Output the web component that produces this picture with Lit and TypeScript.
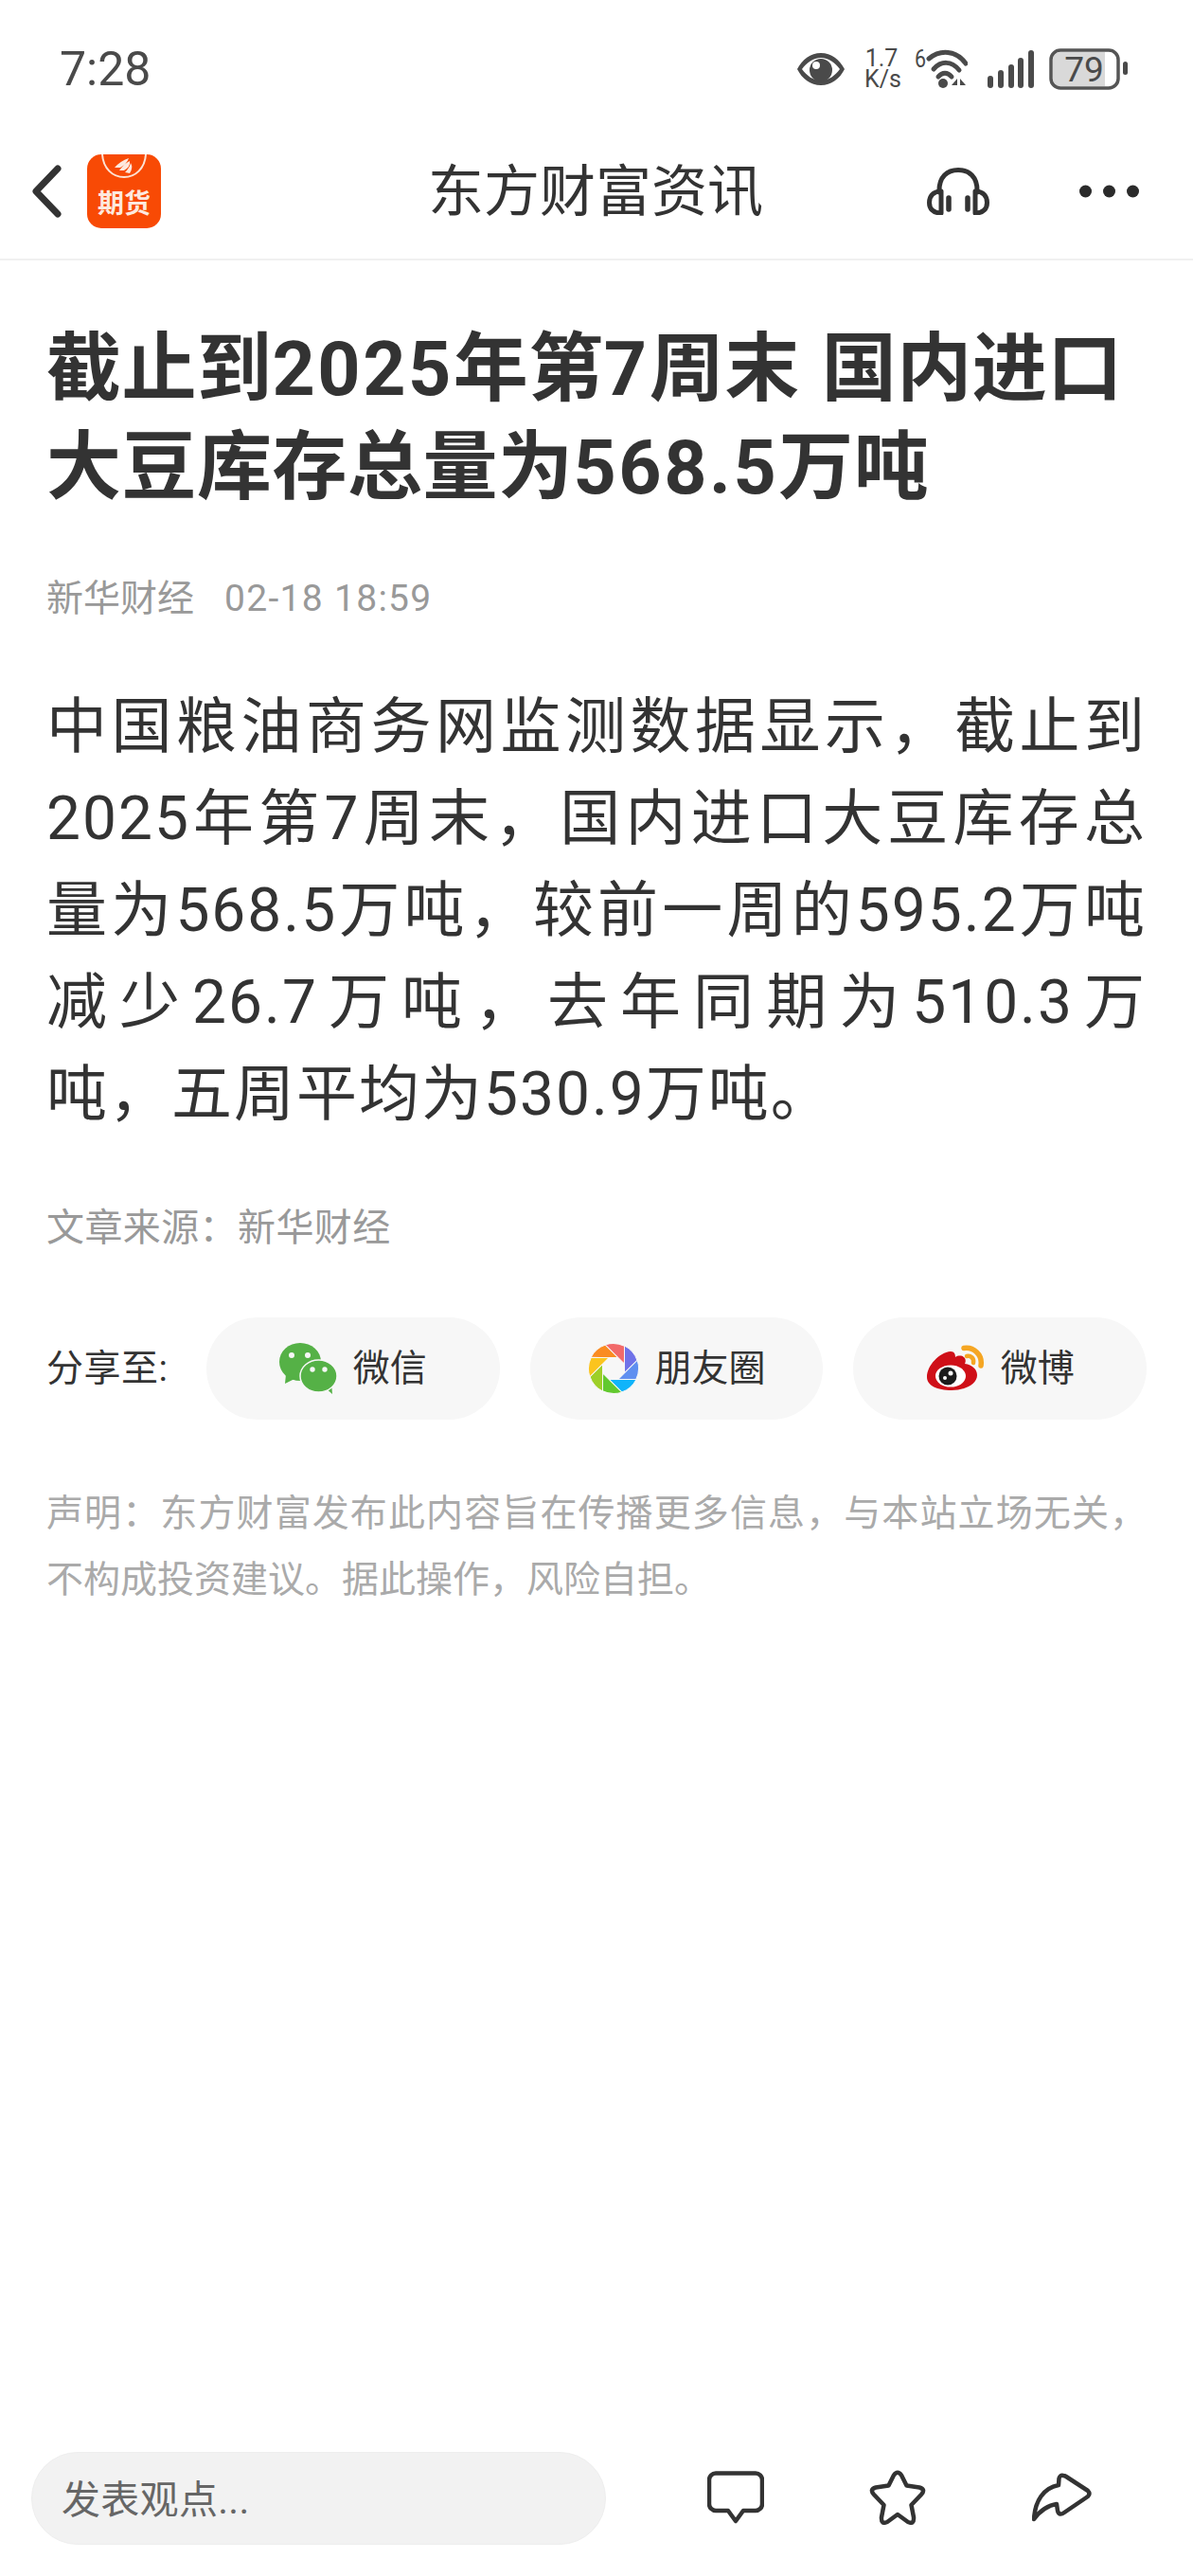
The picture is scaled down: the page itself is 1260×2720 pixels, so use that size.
import { LitElement, html, css, svg } from 'lit';
import { customElement } from 'lit/decorators.js';

const blades = ['#fa8c22', '#f26a6a', '#7072e8', '#5f8ff0', '#10b4fa', '#62c92e', '#9ecf28', '#fbc41e'];

const bodyLines = [
  '中国粮油商务网监测数据显示，截止到',
  '2025年第7周末，国内进口大豆库存总',
  '量为568.5万吨，较前一周的595.2万吨',
  '减少26.7万吨，去年同期为510.3万',
  '吨，五周平均为530.9万吨。',
];

@customElement('app-root')
export class AppRoot extends LitElement {
  static styles = css`
    :host {
      display: block;
      font-family: Roboto, "Noto Sans CJK SC", sans-serif;
      background: #fff;
      color: #333;
    }
    .page {
      min-height: 2720px;
      display: flex;
      flex-direction: column;
    }
    svg { display: block; flex: none; }
    .status {
      height: 145px;
      display: flex;
      align-items: center;
      padding: 0 68px 0 63px;
      color: #4a4a4a;
    }
    .time { font-size: 50px; line-height: 1; flex: 1; }
    .eye { margin-right: -1px; }
    .speed {
      font-size: 25px;
      line-height: 22px;
      width: 36px;
      text-align: center;
      margin: 0 17px 0 21px;
    }
    .wifi { margin-top: -6px; }
    .signal { margin-left: 21px; }
    .battery { margin-left: 16px; }
    .nav {
      height: 130px;
      box-sizing: border-box;
      display: flex;
      align-items: center;
      border-bottom: 2px solid #f0f0f0;
      padding: 0 57px 14px 34px;
      position: relative;
    }
    .logo { margin-left: 27px; }
    .nav-title {
      position: absolute;
      left: 452px;
      top: 18px;
      font-size: 59px;
      line-height: 80px;
    }
    .nav-actions {
      margin-left: auto;
      display: flex;
      align-items: center;
      gap: 95px;
    }
    .content { padding: 0 49px; flex: 1; }
    h1 {
      margin: 63px 0 0;
      font-size: 79px;
      line-height: 104px;
      letter-spacing: 0.5px;
      word-spacing: 3px;
      font-weight: 700;
      color: #333;
    }
    .title-line { display: block; }
    .num { letter-spacing: 2.5px; }
    .meta {
      margin-top: 58px;
      font-size: 39px;
      line-height: 56px;
      color: #999;
      display: flex;
      gap: 32px;
    }
    .meta-time { letter-spacing: 1.3px; }
    .body {
      margin: 59px 0 0;
      font-size: 64px;
      line-height: 97px;
      letter-spacing: 2px;
      color: #333;
    }
    .body-line {
      text-align: justify;
      text-align-last: justify;
    }
    .body-line:last-child { text-align-last: left; }
    .source {
      margin-top: 65px;
      font-size: 40px;
      line-height: 56px;
      letter-spacing: 0.4px;
      color: #999;
    }
    .share {
      margin-top: 66px;
      display: flex;
      align-items: center;
      gap: 32px;
    }
    .share-label {
      font-size: 39px;
      width: 137px;
      flex: none;
      white-space: nowrap;
      letter-spacing: 0.5px;
      padding-bottom: 8px;
    }
    .pill {
      flex: 1;
      height: 108px;
      border-radius: 54px;
      background: #f7f7f7;
      display: flex;
      align-items: center;
      justify-content: center;
      gap: 17px;
      font-size: 39px;
    }
    .pill span { padding-bottom: 8px; }
    .notice {
      margin: 64px 0 0;
      font-size: 39px;
      line-height: 70px;
      color: #aaa;
      text-align: justify;
    }
    .bottom {
      height: 131px;
      display: flex;
      align-items: flex-start;
      padding: 0 0 0 33px;
    }
    .input {
      width: 607px;
      height: 98px;
      box-sizing: border-box;
      border-radius: 49px;
      background: #f2f2f2;
      border: 1px solid #eee;
      font-size: 41px;
      letter-spacing: 0.3px;
      color: #666;
      padding: 0 0 4px 31px;
      display: flex;
      align-items: center;
    }
    .bottom-actions {
      display: flex;
      align-items: center;
      margin: 19px 0 0 107px;
    }
    .star { margin-left: 111px; }
    .forward { margin-left: 112px; }
  `;

  render() {
    return html`<div class="page">
      <div class="status">
        <span class="time">7:28</span>
        <svg class="eye" width="52" height="36" viewBox="0 0 52 36" fill="#4a4a4a">
          <path fill-rule="evenodd" d="M26 1C15 1 6 8 1 18c5 10 14 17 25 17s20-7 25-17C46 8 37 1 26 1zm0 5c8 0 15 5 20 12-5 7-12 12-20 12S11 25 6 18C11 11 18 6 26 6z"/>
          <circle cx="26" cy="19" r="12"/>
          <circle cx="21" cy="14" r="4" fill="#fff"/>
        </svg>
        <div class="speed">1.7<br />K/s</div>
        <svg class="wifi" width="56" height="46" viewBox="0 -6 56 46" fill="none" stroke="#4a4a4a" stroke-width="5" stroke-linecap="round">
          <text x="0" y="18" font-size="25" fill="#4a4a4a" stroke="none" font-family="Roboto" textLength="12" lengthAdjust="spacingAndGlyphs">6</text>
          <path d="M15 9C27 -1 44 0 54 14" />
          <path d="M20 20C28 11 39 11 47 21" />
          <path d="M25 28C29 23 35 23 39 28" />
          <circle cx="30" cy="35" r="5" fill="#4a4a4a" stroke="none"/>
          <path d="M45 30l-6 7h6zM48 30l6 7h-6z" fill="#4a4a4a" stroke="none"/>
        </svg>
        <svg class="signal" width="49" height="40" viewBox="0 0 49 40" fill="#4a4a4a">
          <rect x="0" y="27" width="6" height="13" rx="3"/>
          <rect x="11" y="21" width="6" height="19" rx="3"/>
          <rect x="22" y="15" width="6" height="25" rx="3"/>
          <rect x="32" y="8" width="6" height="32" rx="3"/>
          <rect x="43" y="0" width="6" height="40" rx="3"/>
        </svg>
        <svg class="battery" width="84" height="44" viewBox="0 0 84 44">
          <path d="M4 12a8 8 0 0 1 8-8H59V40H12a8 8 0 0 1-8-8z" fill="#d9d9d9"/>
          <rect x="2" y="2" width="71" height="40" rx="10" fill="none" stroke="#555" stroke-width="3.5"/>
          <rect x="78" y="14" width="5" height="14" rx="2.5" fill="#4a4a4a"/>
          <text x="37" y="35" font-size="37" text-anchor="middle" fill="#4a4a4a" font-family="Roboto">79</text>
        </svg>
      </div>
      <div class="nav">
        <svg width="31" height="56" viewBox="0 0 31 56" fill="none" stroke="#333" stroke-width="7" stroke-linecap="round" stroke-linejoin="round">
          <path d="M27 4L4 28L27 52"/>
        </svg>
        <svg class="logo" width="78" height="78" viewBox="0 0 78 78">
          <rect width="78" height="78" rx="15" fill="#f84a05"/>
          <path d="M16 0C17 15 27 24 39 24S61 15 62 0" fill="none" stroke="#fde2d4" stroke-width="2"/>
          <path d="M29 14Q35 7 44 4Q42 10 35 14ZM34 17Q39 10 45 7Q46 13 39 17ZM40 19Q45 14 46 9Q49 14 45 20Z" fill="#fde9df"/>
          <text x="39" y="62" font-size="28" font-weight="700" text-anchor="middle" fill="#fde9df" font-family="Noto Sans CJK SC">期货</text>
        </svg>
        <span class="nav-title">东方财富资讯</span>
        <div class="nav-actions">
          <svg width="66" height="50" viewBox="0 0 66 50" fill="none" stroke="#333" stroke-width="5" stroke-linecap="round" stroke-linejoin="round">
            <path d="M13 26V24C13 10 21 2.500 33 2.500S53 10 53 24V26"/>
            <path d="M15 25C6 25 2.500 31 2.500 37S6 48 15 48Z" />
            <path d="M51 25C60 25 63.500 31 63.500 37S60 48 51 48Z" />
            <path d="M23 32V44M43 32V44" stroke-width="5.500"/>
          </svg>
          <svg width="63" height="14" viewBox="0 0 63 14" fill="#2b2b2b">
            <circle cx="6.500" cy="7" r="6.500"/><circle cx="31.500" cy="7" r="6.500"/><circle cx="56.500" cy="7" r="6.500"/>
          </svg>
        </div>
      </div>
      <div class="content">
        <h1>
          <span class="title-line">截止到<span class="num">2025</span>年第<span class="num">7</span>周末 国内进口</span>
          <span class="title-line">大豆库存总量为<span class="num">568.5</span>万吨</span>
        </h1>
        <div class="meta"><span>新华财经</span><span class="meta-time">02-18 18:59</span></div>
        <div class="body">
          ${bodyLines.map((line) => html`<div class="body-line">${line}</div>`)}
        </div>
        <div class="source">文章来源：新华财经</div>
        <div class="share">
          <span class="share-label">分享至:</span>
          <div class="pill">
            <svg width="61" height="54" viewBox="0 0 61 54">
              <ellipse cx="22" cy="20" rx="22" ry="20" fill="#55b146"/>
              <path d="M7 33L6 43L16 38Z" fill="#55b146"/>
              <path d="M48 47L56 54L55 42Z" fill="#55b146"/>
              <ellipse cx="41.500" cy="35" rx="19.500" ry="17" fill="#55b146" stroke="#f7f7f7" stroke-width="1.500"/>
              <circle cx="13" cy="13" r="3" fill="#f7f7f7"/><circle cx="30" cy="13" r="3" fill="#f7f7f7"/>
              <circle cx="35" cy="28" r="2.700" fill="#f7f7f7"/><circle cx="48" cy="28" r="2.700" fill="#f7f7f7"/>
            </svg>
            <span>微信</span>
          </div>
          <div class="pill">
            <svg width="54" height="54" viewBox="-27 -27 54 54">
              ${blades.map((color, i) => svg`<path transform="rotate(${i * 45})" d="M-24 -11.500A26.500 26.500 0 0 1 -8.500 -25L4.600 -11.500Z" fill=${color} stroke="#f7f7f7" stroke-width="1"/>`)}
            </svg>
            <span>朋友圈</span>
          </div>
          <div class="pill">
            <svg width="62" height="50" viewBox="0 0 62 50">
              <path d="M1 34C1 22 14 8 26 7C30 7 31 10 31 13C34 11 39 11 41 14C42 16 42 18 41 20C49 21 54 26 54 32C54 41 42 48 27 48C12 48 1 43 1 34Z" fill="#cf0f18"/>
              <ellipse cx="26" cy="33" rx="16" ry="11.500" fill="#fff"/>
              <circle cx="23" cy="33" r="9.500" fill="#1c1c1c"/>
              <circle cx="26" cy="30" r="2.500" fill="#fff"/>
              <circle cx="20" cy="35" r="2" fill="#fff"/>
              <path d="M40 3.500C50 2 60 10 58 22" fill="none" stroke="#f5a623" stroke-width="5.500" stroke-linecap="round"/>
              <path d="M43 12C47 11 51 14 50 19" fill="none" stroke="#f5a623" stroke-width="4.500" stroke-linecap="round"/>
            </svg>
            <span>微博</span>
          </div>
        </div>
        <p class="notice">声明：东方财富发布此内容旨在传播更多信息，与本站立场无关，不构成投资建议。据此操作，风险自担。</p>
      </div>
      <div class="bottom">
        <div class="input">发表观点...</div>
        <div class="bottom-actions">
          <svg width="60" height="56" viewBox="0 0 60 56" fill="none" stroke="#333" stroke-width="4.500" stroke-linejoin="round">
            <path d="M9 2.500H51a7 7 0 0 1 7 7V35a7 7 0 0 1-7 7H38L30 53L22 42H9a7 7 0 0 1-7-7V9.500a7 7 0 0 1 7-7z"/>
          </svg>
          <svg class="star" width="60" height="58" viewBox="0 0 60 58" fill="none" stroke="#333" stroke-width="4.500" stroke-linejoin="round">
            <path d="M26 5.500Q30 0 34 5.500L39.500 16.500L53 18.500Q60 20.500 55 26L44.500 37L47 50Q47.500 58 41 55L30 47L19 55Q12.500 58 13 50L15.500 37L5 26Q0 20.500 7 18.500L20.500 16.500Z"/>
          </svg>
          <svg class="forward" width="63" height="52" viewBox="0 0 63 52" fill="none" stroke="#333" stroke-width="4.500" stroke-linejoin="round">
            <path d="M33 3Q29.500 2 28.500 6L28 13C12 16 3 30 2 49C8 40 18 34 26 33L27 40Q28.500 46 34 42L59 25Q62 22 59 19L36 4Q34.500 3 33 3Z"/>
          </svg>
        </div>
      </div>
    </div>`;
  }
}
